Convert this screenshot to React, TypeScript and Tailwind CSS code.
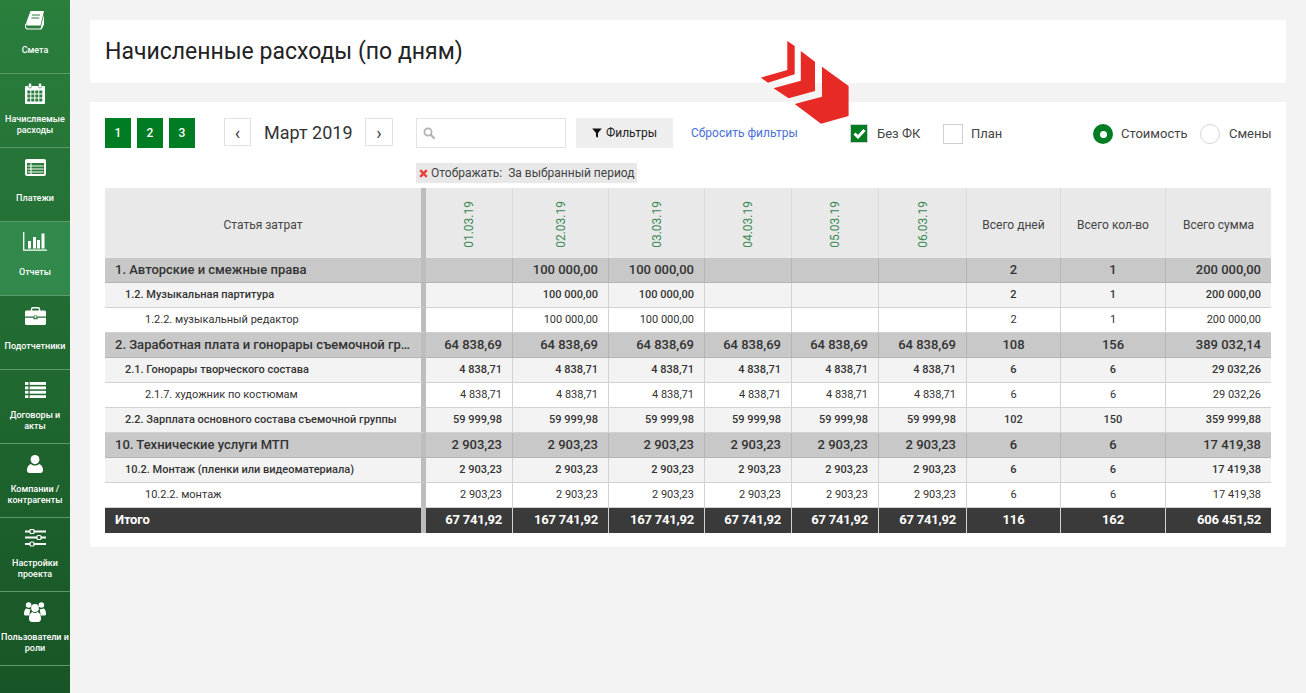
import React from "react";

const Book = () => (
  <svg width="20" height="20" viewBox="0 0 20 20" fill="none">
    <path d="M5.5 1H19L15.5 15.5H2.2C1 15.5 1 13.5 1.5 12Z" fill="#fff" />
    <path d="M1.2 13.5C.6 16.5 1.2 18.5 3 18.5H15.5L19 4.5V14.5L16.5 19.5H2.5C.3 19.5-.4 17 .3 14Z" fill="#fff" />
    <path d="M2.3 16.8H15.8M7 5h8M6.3 8h8" stroke="#2a7d3c" strokeWidth="1" />
  </svg>
);
const Calendar = () => (
  <svg width="20" height="21" viewBox="0 0 20 21" fill="none">
    <path d="M1 3h18a1 1 0 0 1 1 1v16a1 1 0 0 1-1 1H1a1 1 0 0 1-1-1V4a1 1 0 0 1 1-1Z" fill="#fff" />
    <rect x="3.5" y="0" width="3" height="5" rx="1.5" fill="#fff" stroke="#2a7d3c" strokeWidth=".6" />
    <rect x="13.5" y="0" width="3" height="5" rx="1.5" fill="#fff" stroke="#2a7d3c" strokeWidth=".6" />
    {[2, 6, 10, 14].flatMap((x) =>
      [8, 12, 16].map((y) => <rect key={`${x}-${y}`} x={x + 0.3} y={y - 0.5} width="3" height="3" fill="#2a7d3c" />)
    )}
  </svg>
);
const ListAlt = () => (
  <svg width="21" height="17" viewBox="0 0 21 17" fill="none">
    <rect width="21" height="17" rx="2" fill="#fff" />
    <rect x="2" y="4" width="17" height="11" fill="#2a7d3c" />
    <path d="M2.5 7h16M2.5 10h16M2.5 13h16M6 4v11" stroke="#fff" strokeWidth="1" />
  </svg>
);
const Bars = () => (
  <svg width="24" height="19" viewBox="0 0 24 19" fill="none">
    <path d="M.7 0v18.2H24" stroke="#fff" strokeWidth="1.3" />
    <rect x="5" y="9" width="3" height="7.5" fill="#fff" />
    <rect x="10" y="5" width="3" height="11.5" fill="#fff" />
    <rect x="14" y="8" width="3" height="8.5" fill="#fff" />
    <rect x="18.5" y="1.5" width="3" height="15" fill="#fff" />
  </svg>
);
const Briefcase = () => (
  <svg width="21" height="18" viewBox="0 0 21 18" fill="none">
    <path d="M6.5 4V2.2C6.5 1.3 7.2.8 8 .8h5c.8 0 1.5.5 1.5 1.4V4" stroke="#fff" strokeWidth="1.4" />
    <path d="M1.5 3.5h18c.8 0 1.5.7 1.5 1.5v4.5H0V5c0-.8.7-1.5 1.5-1.5Z" fill="#fff" />
    <path d="M0 10.7h8.5v1.6h4v-1.6H21v5.8c0 .8-.7 1.5-1.5 1.5h-18C.7 18 0 17.3 0 16.5Z" fill="#fff" />
    <rect x="9.2" y="8.8" width="2.6" height="2.6" fill="#fff" stroke="#1f6b33" strokeWidth=".6" />
  </svg>
);
const ListIcon = () => (
  <svg width="21" height="16" viewBox="0 0 21 16" fill="#fff">
    {[0, 4.4, 8.8, 13.2].map((y) => (
      <g key={y}>
        <rect x="0" y={y} width="3.4" height="2.9" />
        <rect x="4.6" y={y} width="16.4" height="2.9" />
      </g>
    ))}
  </svg>
);
const User = () => (
  <svg width="16" height="18" viewBox="0 0 16 18" fill="#fff">
    <ellipse cx="8" cy="4.6" rx="4.4" ry="4.6" />
    <path d="M0 15c0-3.5 1.8-5.5 4-6 1 1 2.4 1.5 4 1.5s3-.5 4-1.5c2.2.5 4 2.5 4 6 0 2-1 3-2.5 3h-11C1 18 0 17 0 15Z" />
  </svg>
);
const Sliders = () => (
  <svg width="21" height="18" viewBox="0 0 21 18" fill="none">
    <path d="M0 2.5h21M0 8.5h21M0 15h21" stroke="#fff" strokeWidth="2.2" />
    <rect x="5" y=".5" width="4" height="4" rx="1" fill="#1c5f2d" stroke="#fff" strokeWidth="1.2" />
    <rect x="12" y="6.5" width="4" height="4" rx="1" fill="#1c5f2d" stroke="#fff" strokeWidth="1.2" />
    <rect x="5" y="13" width="4" height="4" rx="1" fill="#1c5f2d" stroke="#fff" strokeWidth="1.2" />
  </svg>
);
const Users = () => (
  <svg width="22" height="20" viewBox="0 0 22 20" fill="#fff">
    <circle cx="4.6" cy="3" r="2.8" />
    <circle cx="17.4" cy="3" r="2.8" />
    <path d="M0 12c0-3.5 1.2-5.5 3-5.5 1 .8 2.3 1 3.5.5-.5 1.5-1 4-1 6.5H2c-1.2 0-2-.5-2-1.5Z" />
    <path d="M22 12c0-3.5-1.2-5.5-3-5.5-1 .8-2.3 1-3.5.5.5 1.5 1 4 1 6.5H20c1.2 0 2-.5 2-1.5Z" />
    <circle cx="11" cy="6" r="3.9" />
    <path d="M5 16.5c0-3.5 1.5-6 3.3-6.5.8.7 1.7 1 2.7 1s1.9-.3 2.7-1c1.8.5 3.3 3 3.3 6.5 0 2-1 3.5-3 3.5H8c-2 0-3-1.5-3-3.5Z" />
  </svg>
);

const menu: { icon: React.ReactNode; label: string[]; active?: boolean }[] = [
  { icon: <Book />, label: ["Смета"] },
  { icon: <Calendar />, label: ["Начисляемые", "расходы"] },
  { icon: <ListAlt />, label: ["Платежи"] },
  { icon: <Bars />, label: ["Отчеты"], active: true },
  { icon: <Briefcase />, label: ["Подотчетники"] },
  { icon: <ListIcon />, label: ["Договоры и", "акты"] },
  { icon: <User />, label: ["Компании /", "контрагенты"] },
  { icon: <Sliders />, label: ["Настройки", "проекта"] },
  { icon: <Users />, label: ["Пользователи и", "роли"] },
];

const days = ["01.03.19", "02.03.19", "03.03.19", "04.03.19", "05.03.19", "06.03.19"];

type Row = { kind: "g" | "s" | "l"; name: string; v: string[]; d: string; q: string; t: string };
const h = (a: string) => [a, a, a, a, a, a];
const rows: Row[] = [
  { kind: "g", name: "1. Авторские и смежные права", v: ["", "100 000,00", "100 000,00", "", "", ""], d: "2", q: "1", t: "200 000,00" },
  { kind: "s", name: "1.2. Музыкальная партитура", v: ["", "100 000,00", "100 000,00", "", "", ""], d: "2", q: "1", t: "200 000,00" },
  { kind: "l", name: "1.2.2. музыкальный редактор", v: ["", "100 000,00", "100 000,00", "", "", ""], d: "2", q: "1", t: "200 000,00" },
  { kind: "g", name: "2. Заработная плата и гонорары съемочной группы", v: h("64 838,69"), d: "108", q: "156", t: "389 032,14" },
  { kind: "s", name: "2.1. Гонорары творческого состава", v: h("4 838,71"), d: "6", q: "6", t: "29 032,26" },
  { kind: "l", name: "2.1.7. художник по костюмам", v: h("4 838,71"), d: "6", q: "6", t: "29 032,26" },
  { kind: "s", name: "2.2. Зарплата основного состава съемочной группы", v: h("59 999,98"), d: "102", q: "150", t: "359 999,88" },
  { kind: "g", name: "10. Технические услуги МТП", v: h("2 903,23"), d: "6", q: "6", t: "17 419,38" },
  { kind: "s", name: "10.2. Монтаж (пленки или видеоматериала)", v: h("2 903,23"), d: "6", q: "6", t: "17 419,38" },
  { kind: "l", name: "10.2.2. монтаж", v: h("2 903,23"), d: "6", q: "6", t: "17 419,38" },
];
const foot = ["67 741,92", "167 741,92", "167 741,92", "67 741,92", "67 741,92", "67 741,92"];

const rowCls = {
  g: "bg-[#c8c8c8] text-[13px] font-medium",
  s: "bg-[#f3f3f3] text-[11px] font-medium",
  l: "bg-white text-[11px] font-normal",
};
const nameCls = { g: "pl-[10px]", s: "pl-[20px]", l: "pl-[40px]" };
const cellBorder = { g: "border-[#b4b4b4]", s: "border-[#d2d2d2]", l: "border-[#d2d2d2]" };

export default function App() {
  return (
    <div className="relative w-[1306px] h-[693px] overflow-hidden bg-[#f3f3f3] [font-family:Roboto,sans-serif] text-[#333]">
      <aside className="absolute left-0 top-0 w-[70px] h-[693px] bg-gradient-to-b from-[#2a7f3d] to-[#185526]">
        {menu.map((m) => (
          <div
            key={m.label[0]}
            className={`relative h-[74px] border-b border-[#5c9a6b] flex flex-col items-center ${m.active ? "bg-[#318a4b]" : ""}`}
          >
            <div className="absolute top-[9px] h-[21px] flex items-center justify-center">{m.icon}</div>
            <div className="absolute top-[39px] h-[23px] w-full flex flex-col items-center justify-center text-[9px] leading-[10.5px] font-medium text-white text-center whitespace-nowrap">
              {m.label.map((l) => (
                <div key={l}>{l}</div>
              ))}
            </div>
          </div>
        ))}
      </aside>

      <div className="absolute left-[90px] top-[20px] w-[1196px] h-[63px] bg-white flex items-center pl-[15px] pt-[1px]">
        <h1 className="text-[23px] font-normal text-[#222]">Начисленные расходы (по дням)</h1>
      </div>

      <div className="absolute left-[90px] top-[102px] w-[1196px] h-[445px] bg-white">
        <div className="absolute left-[15px] top-[16px] flex">
          {["1", "2", "3"].map((n) => (
            <div key={n} className="w-[26px] h-[30px] mr-[6px] bg-[#007d22] text-white text-[12px] font-medium flex items-center justify-center">
              {n}
            </div>
          ))}
        </div>

        <div className="absolute left-[134px] top-[16px] w-[27px] h-[28px] border border-[#e2e2e2] flex items-center justify-center text-[18px] text-[#444]">‹</div>
        <div className="absolute left-[174px] top-[16px] h-[28px] flex items-center text-[18px] text-[#333]">Март 2019</div>
        <div className="absolute left-[275px] top-[16px] w-[28px] h-[28px] border border-[#e2e2e2] flex items-center justify-center text-[18px] text-[#444]">›</div>

        <div className="absolute left-[326px] top-[16px] w-[150px] h-[30px] border border-[#e1e3ea] flex items-center pl-[6px]">
          <svg width="12" height="12" viewBox="0 0 12 12" fill="none">
            <circle cx="5" cy="5" r="3.6" stroke="#b3b3b3" strokeWidth="1.8" />
            <path d="M7.8 7.8 11 11" stroke="#b3b3b3" strokeWidth="2.2" strokeLinecap="round" />
          </svg>
        </div>

        <div className="absolute left-[486px] top-[16px] w-[97px] h-[30px] bg-[#eeeeee] flex items-center justify-center gap-[4px] text-[12px] text-[#222]">
          <svg width="10" height="10" viewBox="0 0 10 10" fill="#111">
            <path d="M.2.5h9.6L6 5v4.8L4 8.5V5Z" />
          </svg>
          Фильтры
        </div>

        <div className="absolute left-[601px] top-[16px] h-[30px] flex items-center text-[12px] text-[#4a6fd8]">Сбросить фильтры</div>

        <div className="absolute left-[760px] top-[22px] w-[18px] h-[19px] bg-[#007d22] border border-[#cfcfcf] flex items-center justify-center">
          <svg width="13" height="11" viewBox="0 0 13 11" fill="none">
            <path d="M1.5 5.5 5 9l6.5-7" stroke="#fff" strokeWidth="3" />
          </svg>
        </div>
        <div className="absolute left-[787px] top-[22px] h-[19px] flex items-center text-[13px] text-[#444]">Без ФК</div>
        <div className="absolute left-[853px] top-[22px] w-[20px] h-[20px] bg-white border border-[#cfcfcf]" />
        <div className="absolute left-[881px] top-[22px] h-[19px] flex items-center text-[13px] text-[#444]">План</div>

        <div className="absolute left-[1003px] top-[22px] w-[20px] h-[20px] rounded-full bg-[#007d22] flex items-center justify-center">
          <div className="w-[7px] h-[7px] rounded-full bg-white" />
        </div>
        <div className="absolute left-[1031px] top-[22px] h-[19px] flex items-center text-[13px] text-[#444]">Стоимость</div>
        <div className="absolute left-[1110px] top-[22px] w-[20px] h-[20px] rounded-full bg-white border border-[#d5d5d5]" />
        <div className="absolute left-[1139px] top-[22px] h-[19px] flex items-center text-[13px] text-[#444]">Смены</div>

        <div className="absolute left-[326px] top-[61px] w-[221px] h-[20px] bg-[#e8e8e8] flex items-center pl-[3px] text-[12px] text-[#444] whitespace-pre">
          <svg width="9" height="9" viewBox="0 0 9 9" className="mr-[3px] shrink-0" fill="none">
            <path d="M1.2 1.2 7.8 7.8M7.8 1.2 1.2 7.8" stroke="#e9423a" strokeWidth="2.4" />
          </svg>
          Отображать:  За выбранный период
        </div>

        <table className="absolute left-[15px] top-[86px] w-[1166px] table-fixed border-separate border-spacing-0">
          <colgroup>
            {[321, 87, 96, 96, 87, 87, 88, 94, 105, 105].map((w, i) => (
              <col key={i} style={{ width: w }} />
            ))}
          </colgroup>
          <thead>
            <tr className="h-[70px] bg-[#e9e9e9] text-[12px] font-normal text-[#444]">
              <th className="font-normal border-r-[5px] border-[#bdbdbd] pt-[3px]">Статья затрат</th>
              {days.map((d) => (
                <th key={d} className="font-normal border-r border-[#dcdcdc] pt-[2px]">
                  <div className="flex justify-center">
                    <span className="[writing-mode:vertical-rl] rotate-180 text-[#3a8a55]">{d}</span>
                  </div>
                </th>
              ))}
              <th className="font-normal border-r border-[#dcdcdc] pt-[3px]">Всего дней</th>
              <th className="font-normal border-r border-[#dcdcdc] pt-[3px]">Всего кол-во</th>
              <th className="font-normal pt-[3px]">Всего сумма</th>
            </tr>
          </thead>
          <tbody>
            {rows.map((r) => {
              const b = `border-b ${cellBorder[r.kind]}`;
              return (
                <tr key={r.name} className={`h-[25px] ${rowCls[r.kind]} text-[#333]`}>
                  <td className={`${b} ${nameCls[r.kind]} pr-[10px] border-r-[5px] border-r-[#bdbdbd] truncate`}>{r.name}</td>
                  {r.v.map((v, i) => (
                    <td key={i} className={`${b} border-r pr-[10px] text-right`}>{v}</td>
                  ))}
                  <td className={`${b} border-r text-center`}>{r.d}</td>
                  <td className={`${b} border-r text-center`}>{r.q}</td>
                  <td className={`${b} pr-[10px] text-right`}>{r.t}</td>
                </tr>
              );
            })}
            <tr className="h-[25px] bg-[#3a3a3a] text-white text-[13px] font-bold tracking-[-0.2px]">
              <td className="pl-[10px] pb-[2px] border-r-[5px] border-r-[#bdbdbd]">Итого</td>
              {foot.map((v, i) => (
                <td key={i} className="border-r border-[#d2d2d2] pr-[10px] pb-[2px] text-right">{v}</td>
              ))}
              <td className="border-r border-[#d2d2d2] pb-[2px] text-center">116</td>
              <td className="border-r border-[#d2d2d2] pb-[2px] text-center">162</td>
              <td className="pr-[10px] pb-[2px] text-right">606 451,52</td>
            </tr>
          </tbody>
        </table>
      </div>

      <svg className="absolute left-[755px] top-[36px]" width="100" height="95" viewBox="755 36 100 95" fill="#e82a26">
        <path d="M822 66.7 848.6 86V116L821 123.7 794.7 104 822 96.7Z" />
        <path d="M800.8 51 815 61.7V91L788.6 98.3 773.5 88.3 800.8 80.7Z" />
        <path d="M787.3 41 794.7 46V74.3L768 82.7 760.8 77.7 787.3 70Z" />
      </svg>
    </div>
  );
}
